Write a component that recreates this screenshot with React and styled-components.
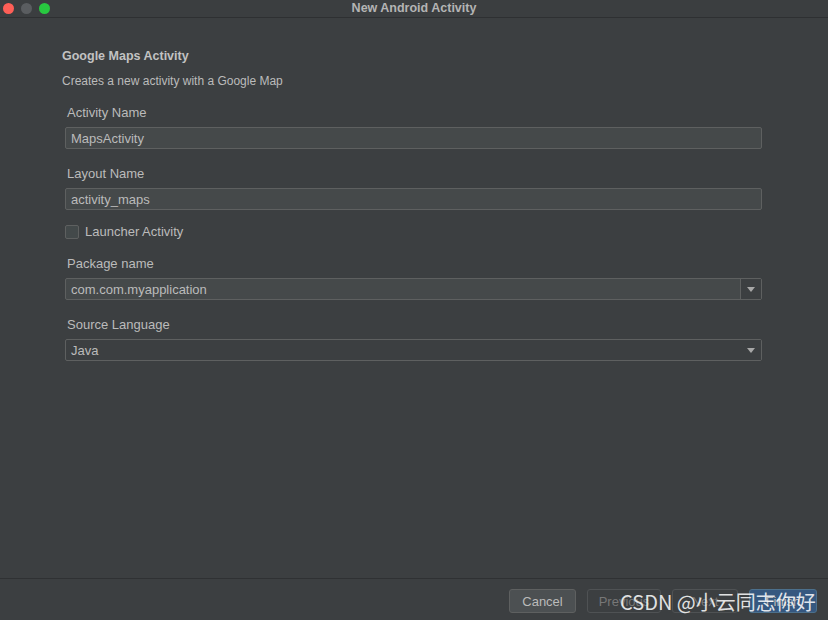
import React from 'react';
import styled, { createGlobalStyle } from 'styled-components';

const GlobalStyle = createGlobalStyle`
    html, body {
        margin: 0;
        padding: 0;
        background: #3c3f41;
    }
    body {
        font-family: "Liberation Sans", "Noto Sans", Arial, sans-serif;
    }
`;

const Window = styled.div`
    width: 828px;
    height: 620px;
    background: #3c3f41;
    display: flex;
    flex-direction: column;
    position: relative;
    overflow: hidden;
    color: #bbbbbb;
`;

const TitleBar = styled.header`
    height: 17px;
    border-bottom: 1px solid #2e3032;
    background: #3b3e40;
    display: flex;
    align-items: center;
    position: relative;
`;

const Lights = styled.div`
    display: flex;
    gap: 7px;
    padding-left: 3px;
`;

const Light = styled.span`
    width: 11px;
    height: 11px;
    border-radius: 50%;
    background: ${p => p.color};
`;

const Title = styled.div`
    position: absolute;
    left: 0;
    right: 0;
    text-align: center;
    font-size: 12.5px;
    font-weight: bold;
    color: #b4b4b4;
    top: 1px;
`;

const Body = styled.main`
    flex: 1;
    padding: 30px 0 0 62px;
    display: flex;
    flex-direction: column;
`;

const Heading = styled.h1`
    margin: 0;
    font-size: 12.5px;
    font-weight: bold;
    color: #c2c2c2;
    line-height: 16px;
`;

const Description = styled.p`
    margin: 10px 0 0;
    font-size: 12px;
    line-height: 14px;
    color: #bbbbbb;
`;

const Form = styled.div`
    display: flex;
    flex-direction: column;
    padding-left: 3px;
    margin-top: 3px;
`;

const Field = styled.div`
    display: flex;
    flex-direction: column;
    margin-top: ${p => p.$top || 0}px;
`;

const Label = styled.label`
    font-size: 13px;
    line-height: 15px;
    color: #bbbbbb;
    padding-left: 2px;
    margin-bottom: 7px;
`;

const Input = styled.div`
    width: 695px;
    height: 20px;
    border: 1px solid #5e6060;
    border-radius: 2px;
    background: ${p => p.$editable ? '#45494a' : '#3c3f41'};
    display: flex;
    align-items: center;
    font-size: 13px;
    color: #bbbbbb;
    box-sizing: content-box;
`;

const Value = styled.span`
    flex: 1;
    padding-left: 5px;
`;

const ArrowBox = styled.span`
    width: 20px;
    height: 100%;
    display: flex;
    align-items: center;
    justify-content: center;
    border-left: ${p => p.$divided ? '1px solid #5e6060' : 'none'};
    background: #3c3f41;
`;

const Arrow = styled.span`
    width: 0;
    height: 0;
    border-left: 4px solid transparent;
    border-right: 4px solid transparent;
    border-top: 5px solid #a8a8a8;
`;

const CheckRow = styled.div`
    display: flex;
    align-items: center;
    gap: 6px;
    margin-top: 14px;
`;

const Box = styled.span`
    width: 12px;
    height: 12px;
    border: 1px solid #5e6060;
    border-radius: 2px;
    background: #43494a;
`;

const CheckLabel = styled.span`
    font-size: 13px;
    color: #bbbbbb;
`;

const Footer = styled.footer`
    height: 42px;
    border-top: 1px solid #2f3133;
    display: flex;
    align-items: flex-start;
    justify-content: flex-end;
    gap: 11px;
    padding: 10px 11px 0 0;
    box-sizing: border-box;
`;

const Button = styled.button`
    height: 24px;
    width: ${p => p.$w}px;
    border-radius: 3px;
    font-family: inherit;
    font-size: 13px;
    padding: 0;
    border: 1px solid ${p => p.$primary ? '#4c708c' : p.$disabled ? '#4f5254' : '#5e6060'};
    background: ${p => p.$primary ? '#365880' : p.$disabled ? '#3c3f41' : '#4c5052'};
    color: ${p => p.$disabled ? '#777777' : '#bbbbbb'};
`;

const Watermark = styled.div`
    position: absolute;
    left: 620px;
    top: 587px;
    font-family: "Noto Sans CJK SC", "Noto Sans", sans-serif;
    font-size: 20px;
    color: rgba(255, 255, 255, 0.85);
    pointer-events: none;
    white-space: nowrap;
`;

function Combo({ value, divided }) {
    return (
        <Input $editable={divided}>
            <Value>{value}</Value>
            <ArrowBox $divided={divided}><Arrow /></ArrowBox>
        </Input>
    );
}

export default function App() {
    return (
        <Window>
            <GlobalStyle />
            <TitleBar>
                <Lights>
                    <Light color="#fe5f57" />
                    <Light color="#5a5d60" />
                    <Light color="#28c840" />
                </Lights>
                <Title>New Android Activity</Title>
            </TitleBar>
            <Body>
                <Heading>Google Maps Activity</Heading>
                <Description>Creates a new activity with a Google Map</Description>
                <Form>
                    <Field $top={14}>
                        <Label>Activity Name</Label>
                        <Input $editable><Value>MapsActivity</Value></Input>
                    </Field>
                    <Field $top={17}>
                        <Label>Layout Name</Label>
                        <Input $editable><Value>activity_maps</Value></Input>
                    </Field>
                    <CheckRow>
                        <Box />
                        <CheckLabel>Launcher Activity</CheckLabel>
                    </CheckRow>
                    <Field $top={17}>
                        <Label>Package name</Label>
                        <Combo value="com.com.myapplication" divided />
                    </Field>
                    <Field $top={17}>
                        <Label>Source Language</Label>
                        <Combo value="Java" />
                    </Field>
                </Form>
            </Body>
            <Footer>
                <Button $w={67}>Cancel</Button>
                <Button $w={74} $disabled>Previous</Button>
                <Button $w={66} $disabled>Next</Button>
                <Button $w={68} $primary>Finish</Button>
            </Footer>
            <Watermark>CSDN @小云同志你好</Watermark>
        </Window>
    );
}
